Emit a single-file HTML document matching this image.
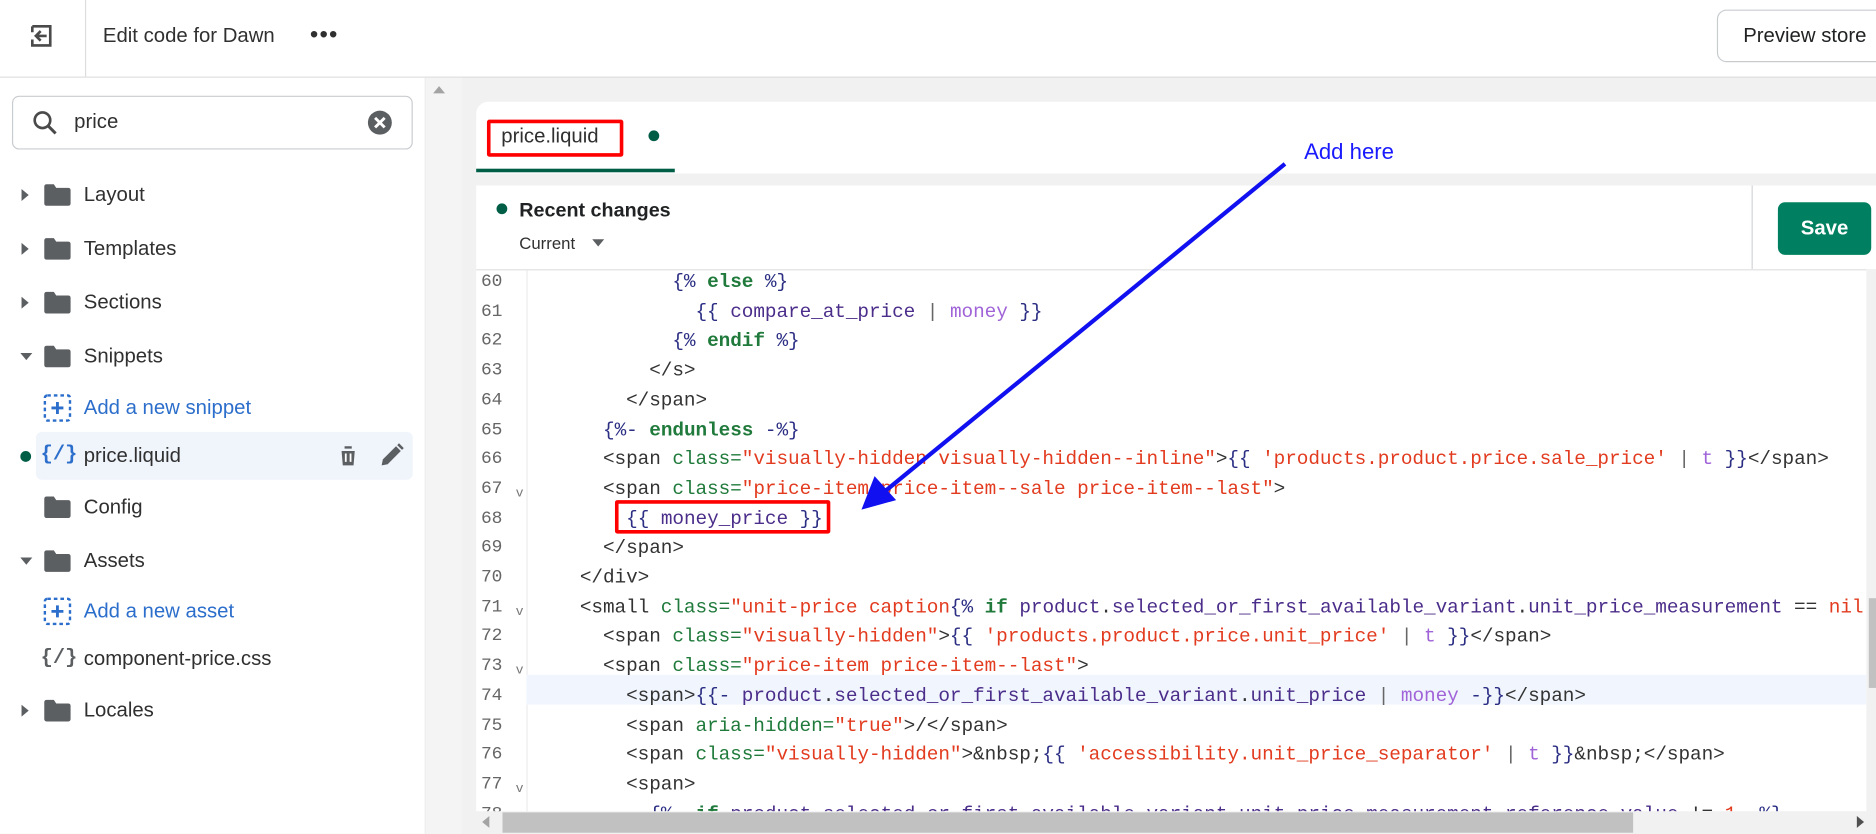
<!DOCTYPE html>
<html><head><meta charset="utf-8"><style>
html,body{margin:0;padding:0;width:1876px;height:833px;overflow:hidden;background:#f1f1f1}
#w{position:absolute;left:0;top:0;width:1568px;height:697px;transform:scale(1.19643);transform-origin:0 0;font-family:"Liberation Sans",sans-serif;color:#303030;background:#f1f1f1;overflow:hidden}
.a{position:absolute}
.top{left:0;top:0;width:1568px;height:64px;background:#fff;border-bottom:1px solid #dcdcdc}
.side{left:0;top:65px;width:355px;height:632px;background:#fff}
.it{position:absolute;left:0;height:40px;width:345px;font-size:17px;line-height:40px}
.tri.r{border-top:5px solid transparent;border-bottom:5px solid transparent;border-left:6px solid #5c5f62}
.tri.d{top:17px!important;border-left:5px solid transparent;border-right:5px solid transparent;border-top:6px solid #5c5f62}
.fold{position:absolute;left:36px;top:10px;width:24px;height:20px}
.it .t{position:absolute;left:70px;top:0}
.code{left:398px;top:225px;width:1162px;height:453px;background:#fff;overflow:hidden;border-top:1px solid #e1e1e1}
.ln{position:absolute;left:0;width:1162px;height:24.7px;line-height:24.7px;font-family:"Liberation Mono",monospace;font-size:16.2px;white-space:pre;letter-spacing:-0.05px}
.ln .n{position:absolute;left:4px;color:#666;font-size:15px}
.ln .c{position:absolute;left:48px;color:#333}
.ln .f{position:absolute;left:33px;top:4px;font-size:11px;color:#777}
.g{color:#1f7a3b}.s{color:#e23b1f}.d{color:#2b2e83}.k{color:#1f7a3b;font-weight:bold}.v{color:#4b2d8a}.m{color:#a064d8}.p{color:#666}
</style></head><body><div id="w">
<div class="a top">
 <svg class="a" style="left:24px;top:19px" width="22" height="22" viewBox="0 0 22 22"><path d="M3 3h15v16H3v-5M3 8V3" fill="none" stroke="#4a4a4a" stroke-width="2.2"/><path d="M15 11H6M10 7l-4 4 4 4" fill="none" stroke="#4a4a4a" stroke-width="2.2"/></svg>
 <div class="a" style="left:71px;top:0;width:1px;height:64px;background:#dcdcdc"></div>
 <div class="a" style="left:86px;top:20px;font-size:17px">Edit code for Dawn</div>
 <div class="a" style="left:259px;top:24px;font-size:20px;letter-spacing:1px;line-height:10px">•••</div>
 <div class="a" style="left:1435px;top:8px;width:150px;height:42px;border:1px solid #c9cccf;border-radius:8px;background:#fff"></div>
 <div class="a" style="left:1457px;top:20px;font-size:17px;color:#202223">Preview store</div>
</div>
<div class="a side">
 <div class="a" style="left:10px;top:15px;width:333px;height:43px;border:1px solid #c9cccf;border-radius:6px"></div>
 <svg class="a" style="left:27px;top:27px" width="22" height="22" viewBox="0 0 22 22"><circle cx="8.5" cy="8.5" r="6.5" fill="none" stroke="#4a4a4a" stroke-width="2.2"/><path d="M13.5 13.5l6 6" stroke="#4a4a4a" stroke-width="2.5"/></svg>
 <div class="a" style="left:62px;top:27px;font-size:17px">price</div>
 <svg class="a" style="left:307px;top:27px" width="21" height="21" viewBox="0 0 21 21"><circle cx="10.5" cy="10.5" r="10" fill="#5c5f62"/><path d="M6.5 6.5l8 8M14.5 6.5l-8 8" stroke="#fff" stroke-width="2.4"/></svg>
</div>
<div class="a" style="left:355px;top:65px;width:30px;height:632px;background:#f4f4f4;border-left:1px solid #eee"></div>
<div class="a" style="left:362px;top:72px;border-left:5px solid transparent;border-right:5px solid transparent;border-bottom:6px solid #a3a3a3"></div>
<div class="a" style="left:30px;top:361px;width:315px;height:40px;background:#f0f4fb;border-radius:5px"></div>
<svg width="0" height="0" style="position:absolute"><defs><symbol id="fo" viewBox="0 0 24 20"><path d="M1 3q0-2 2-2h6l2 3h10q2 0 2 2v11q0 2-2 2H3q-2 0-2-2z" fill="#5c5f62"/></symbol><symbol id="ad" viewBox="0 0 24 24"><rect x="1.5" y="1.5" width="21" height="21" rx="2" fill="none" stroke="#2c6ecb" stroke-width="2" stroke-dasharray="3 2.5"/><path d="M12 7v10M7 12h10" stroke="#2c6ecb" stroke-width="2.4"/></symbol></defs></svg>
<div class="it" style="top:143px"><span class="tri r" style="position:absolute;left:18px;top:15px"></span><svg class="fold"><use href="#fo"/></svg><span class="t">Layout</span></div>
<div class="it" style="top:188px"><span class="tri r" style="position:absolute;left:18px;top:15px"></span><svg class="fold"><use href="#fo"/></svg><span class="t">Templates</span></div>
<div class="it" style="top:233px"><span class="tri r" style="position:absolute;left:18px;top:15px"></span><svg class="fold"><use href="#fo"/></svg><span class="t">Sections</span></div>
<div class="it" style="top:278px"><span class="tri d" style="position:absolute;left:17px"></span><svg class="fold"><use href="#fo"/></svg><span class="t">Snippets</span></div>
<div class="it" style="top:321px"><svg class="fold" style="left:36px;top:8px;width:24px;height:24px"><use href="#ad"/></svg><span class="t" style="color:#2c6ecb">Add a new snippet</span></div>
<div class="it" style="top:361px"><span class="a" style="left:17px;top:16px;width:9px;height:9px;border-radius:50%;background:#005e46"></span><span class="a" style="left:34px;top:0;color:#2c6ecb;font-family:'Liberation Mono',monospace;font-weight:bold;font-size:17px">{/}</span><span class="t">price.liquid</span>
 <svg class="a" style="left:281px;top:10px" width="20" height="20" viewBox="0 0 20 20"><path d="M3 4h14M7 4V2h6v2M4.5 6h11l-1 12h-9z" fill="#5c5f62"/><path d="M8 8v7M12 8v7" stroke="#fff" stroke-width="1.5"/></svg>
 <svg class="a" style="left:317px;top:9px" width="21" height="21" viewBox="0 0 21 21"><path d="M2 19l1-5L14 3l4 4L7 18z" fill="#5c5f62"/><path d="M15 2l1.5-1.5 4 4L19 6z" fill="#5c5f62"/></svg>
</div>
<div class="it" style="top:404px"><svg class="fold"><use href="#fo"/></svg><span class="t">Config</span></div>
<div class="it" style="top:449px"><span class="tri d" style="position:absolute;left:17px"></span><svg class="fold"><use href="#fo"/></svg><span class="t">Assets</span></div>
<div class="it" style="top:491px"><svg class="fold" style="left:36px;top:8px;width:24px;height:24px"><use href="#ad"/></svg><span class="t" style="color:#2c6ecb">Add a new asset</span></div>
<div class="it" style="top:531px"><span class="a" style="left:34px;top:0;color:#5c5f62;font-family:'Liberation Mono',monospace;font-weight:bold;font-size:17px">{/}</span><span class="t">component-price.css</span></div>
<div class="it" style="top:574px"><span class="tri r" style="position:absolute;left:18px;top:15px"></span><svg class="fold"><use href="#fo"/></svg><span class="t">Locales</span></div>

<div class="a" style="left:398px;top:85px;width:1180px;height:60px;background:#fff;border-radius:10px 0 0 0"></div>
<div class="a" style="left:398px;top:141px;width:166px;height:3px;background:#005e46"></div>
<div class="a" style="left:419px;top:104px;font-size:17px">price.liquid</div>
<div class="a" style="left:407px;top:100px;width:108px;height:25px;border:3px solid #f00;border-radius:2px"></div>
<div class="a" style="left:542px;top:109px;width:9px;height:9px;border-radius:50%;background:#005e46"></div>
<div class="a" style="left:398px;top:155px;width:1180px;height:70px;background:#fff"></div>
<div class="a" style="left:415px;top:170px;width:9px;height:9px;border-radius:50%;background:#005e46"></div>
<div class="a" style="left:434px;top:167px;font-size:16.5px;font-weight:bold;color:#202223">Recent changes</div>
<div class="a" style="left:434px;top:195px;font-size:14px;color:#303030">Current</div>
<div class="a" style="left:495px;top:200px;border-left:5px solid transparent;border-right:5px solid transparent;border-top:6px solid #5c5f62"></div>
<div class="a" style="left:1464px;top:155px;width:1px;height:70px;background:#d2d5d8"></div>
<div class="a" style="left:1486px;top:169px;width:78px;height:44px;background:#008060;border-radius:6px;color:#fff;font-weight:bold;font-size:17px;line-height:44px;text-align:center">Save</div>

<div class="a code">
<div class="a" style="left:42px;top:0;width:1px;height:453px;background:#ececec"></div>
<div class="a" style="left:42px;top:338px;width:1120px;height:25px;background:#f1f6fe"></div>
<div class="ln" style="top:-2px"><span class="n">60</span><span class="c">            <span class="d">{%</span> <span class="k">else</span> <span class="d">%}</span></span></div>
<div class="ln" style="top:22.7px"><span class="n">61</span><span class="c">              <span class="d">{{</span> <span class="v">compare_at_price</span> <span class="p">|</span> <span class="m">money</span> <span class="d">}}</span></span></div>
<div class="ln" style="top:47.4px"><span class="n">62</span><span class="c">            <span class="d">{%</span> <span class="k">endif</span> <span class="d">%}</span></span></div>
<div class="ln" style="top:72.1px"><span class="n">63</span><span class="c">          &lt;/s&gt;</span></div>
<div class="ln" style="top:96.8px"><span class="n">64</span><span class="c">        &lt;/span&gt;</span></div>
<div class="ln" style="top:121.5px"><span class="n">65</span><span class="c">      <span class="d">{%-</span> <span class="k">endunless</span> <span class="d">-%}</span></span></div>
<div class="ln" style="top:146.2px"><span class="n">66</span><span class="c">      &lt;span <span class="g">class=</span><span class="s">"visually-hidden visually-hidden--inline"</span>&gt;<span class="d">{{</span> <span class="s">'products.product.price.sale_price'</span> <span class="p">|</span> <span class="m">t</span> <span class="d">}}</span>&lt;/span&gt;</span></div>
<div class="ln" style="top:170.9px"><span class="n">67</span><span class="f">v</span><span class="c">      &lt;span <span class="g">class=</span><span class="s">"price-item price-item--sale price-item--last"</span>&gt;</span></div>
<div class="ln" style="top:195.6px"><span class="n">68</span><span class="c">        <span class="d">{{</span> <span class="v">money_price</span> <span class="d">}}</span></span></div>
<div class="ln" style="top:220.3px"><span class="n">69</span><span class="c">      &lt;/span&gt;</span></div>
<div class="ln" style="top:245px"><span class="n">70</span><span class="c">    &lt;/div&gt;</span></div>
<div class="ln" style="top:269.7px"><span class="n">71</span><span class="f">v</span><span class="c">    &lt;small <span class="g">class=</span><span class="s">"unit-price caption</span><span class="d">{%</span> <span class="k">if</span> <span class="v">product</span>.<span class="v">selected_or_first_available_variant</span>.<span class="v">unit_price_measurement</span> == <span class="s">nil</span></span></div>
<div class="ln" style="top:294.4px"><span class="n">72</span><span class="c">      &lt;span <span class="g">class=</span><span class="s">"visually-hidden"</span>&gt;<span class="d">{{</span> <span class="s">'products.product.price.unit_price'</span> <span class="p">|</span> <span class="m">t</span> <span class="d">}}</span>&lt;/span&gt;</span></div>
<div class="ln" style="top:319.1px"><span class="n">73</span><span class="f">v</span><span class="c">      &lt;span <span class="g">class=</span><span class="s">"price-item price-item--last"</span>&gt;</span></div>
<div class="ln" style="top:343.8px"><span class="n">74</span><span class="c">        &lt;span&gt;<span class="d">{{-</span> <span class="v">product</span>.<span class="v">selected_or_first_available_variant</span>.<span class="v">unit_price</span> <span class="p">|</span> <span class="m">money</span> <span class="d">-}}</span>&lt;/span&gt;</span></div>
<div class="ln" style="top:368.5px"><span class="n">75</span><span class="c">        &lt;span <span class="g">aria-hidden=</span><span class="s">"true"</span>&gt;/&lt;/span&gt;</span></div>
<div class="ln" style="top:393.2px"><span class="n">76</span><span class="c">        &lt;span <span class="g">class=</span><span class="s">"visually-hidden"</span>&gt;&amp;nbsp;<span class="d">{{</span> <span class="s">'accessibility.unit_price_separator'</span> <span class="p">|</span> <span class="m">t</span> <span class="d">}}</span>&amp;nbsp;&lt;/span&gt;</span></div>
<div class="ln" style="top:417.9px"><span class="n">77</span><span class="f">v</span><span class="c">        &lt;span&gt;</span></div>
<div class="ln" style="top:442.6px"><span class="n">78</span><span class="c">          <span class="d">{%-</span> <span class="k">if</span> <span class="v">product</span>.<span class="v">selected_or_first_available_variant</span>.<span class="v">unit_price_measurement</span>.<span class="v">reference_value</span> != <span class="s">1</span> <span class="d">-%}</span></span></div>
</div>
<div class="a" style="left:1560px;top:225px;width:8px;height:453px;background:#f1f1f1"></div>
<div class="a" style="left:1562px;top:500px;width:6px;height:75px;background:#c1c1c1"></div>
<div class="a" style="left:398px;top:678px;width:1170px;height:19px;background:#f1f1f1"></div>
<div class="a" style="left:420px;top:679px;width:945px;height:17px;background:#c1c1c1"></div>
<div class="a" style="left:1552px;top:682px;border-top:5px solid transparent;border-bottom:5px solid transparent;border-left:6px solid #505050"></div>
<div class="a" style="left:403px;top:682px;border-top:5px solid transparent;border-bottom:5px solid transparent;border-right:6px solid #a3a3a3"></div>

<div class="a" style="left:514px;top:418px;width:174px;height:22px;border:3px solid #f00;border-radius:2px"></div>
<div class="a" style="left:1090px;top:116px;font-size:18.5px;color:#1a1aff">Add here</div>
<svg class="a" style="left:0;top:0" width="1568" height="697"><path d="M1074 137L738 412" stroke="#1010f0" stroke-width="3.5"/><path d="M720 426L731 398L749 418z" fill="#1010f0"/></svg>
</div></body></html>
